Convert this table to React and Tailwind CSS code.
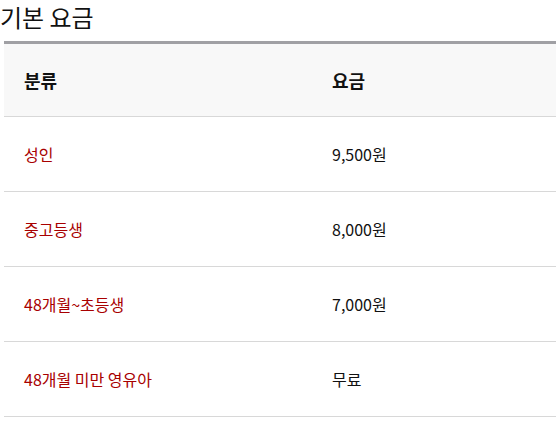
const rows = [
  { label: "성인", price: "9,500원" },
  { label: "중고등생", price: "8,000원" },
  { label: "48개월~초등생", price: "7,000원" },
  { label: "48개월 미만 영유아", price: "무료" },
];

export default function App() {
  return (
    <div className="w-[556px] bg-white font-['Noto_Sans_CJK_KR','Noto_Sans',sans-serif] text-[#111]">
      <h2 className="h-[41px] pt-[1px] text-[24px] leading-[32px] font-normal">기본 요금</h2>
      <div className="ml-[4px] border-t-[3px] border-[#a0a0a4]">
        <div className="flex h-[73px] items-center border-b border-[#d8d8d8] bg-[#f8f8f8] text-[18px] font-bold">
          <div className="w-[308px] pl-[20px]">분류</div>
          <div className="pl-[20px]">요금</div>
        </div>
        {rows.map((r) => (
          <div key={r.label} className="flex h-[75px] items-center border-b border-[#d8d8d8] text-[16px]">
            <div className="w-[308px] pl-[20px] text-[#a80000]">{r.label}</div>
            <div className="pl-[20px] text-[#111]">{r.price}</div>
          </div>
        ))}
      </div>
    </div>
  );
}
